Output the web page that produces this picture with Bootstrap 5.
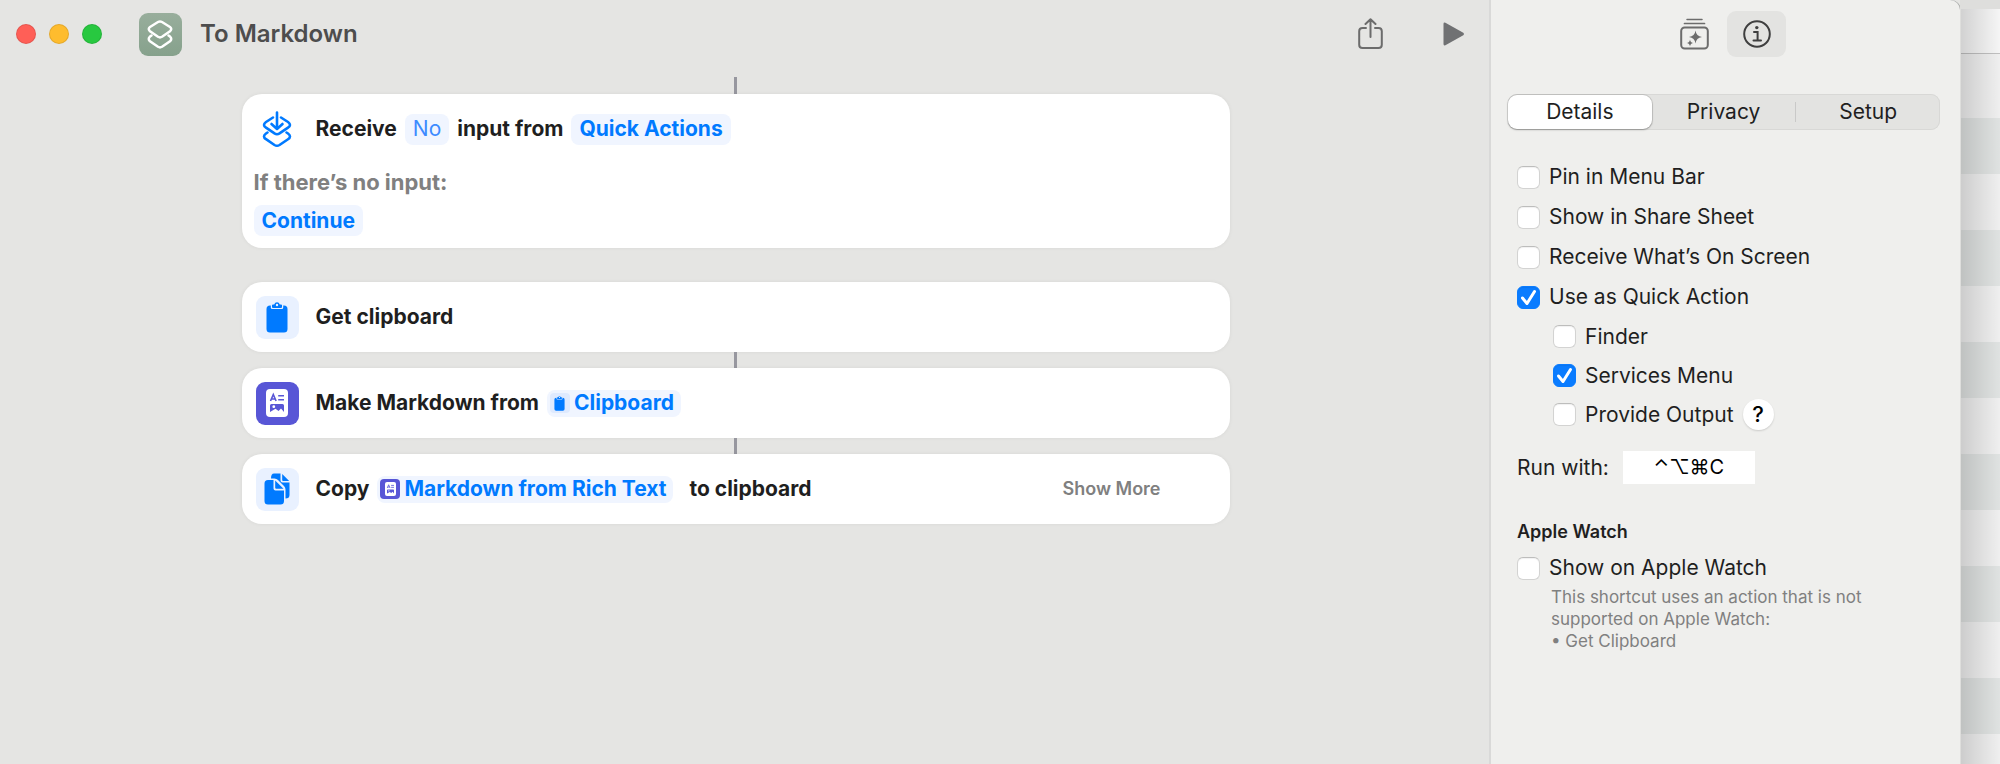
<!DOCTYPE html>
<html lang="en">
<head>
<meta charset="utf-8">
<meta name="viewport" content="width=device-width, initial-scale=1">
<title>To Markdown</title>
<link href="https://cdn.jsdelivr.net/npm/bootstrap@5.3.0/dist/css/bootstrap.min.css" rel="stylesheet">
<script src="https://cdn.jsdelivr.net/npm/bootstrap@5.3.0/dist/js/bootstrap.bundle.min.js"></script>
<style>
  body { font-family: Inter, "Liberation Sans", sans-serif; font-size: 21px; line-height: 30px; color: #1f1f1f; background: #e5e5e3; }
  svg { display: block; flex: none; }
  .editor { min-width: 0; }
  .titlebar { height: 68px; padding: 0 24px 0 16px; }
  .light { width: 20px; height: 20px; border-radius: 50%; border: 1px solid rgba(0,0,0,.1); padding: 0; }
  .light-close { background: #ff5f57; }
  .light-min { background: #febc2e; }
  .light-zoom { background: #28c840; }
  .lights { gap: 13px; margin-right: 37px; }
  .app-icon { width: 43px; height: 43px; border-radius: 9px; background: linear-gradient(#98ae9c, #86a18c); margin-right: 18px; }
  .doc-title { font-size: 24px; font-weight: 600; color: #4d4d4d; }
  .tool { border: 0; background: none; padding: 0; }
  .tools { gap: 60px; }

  .flow { padding: 9px 18px 40px 0; }
  .steps { width: 988px; max-width: 100%; }
  .step { background: #fff; border-radius: 20px; box-shadow: 0 0 4px rgba(0,0,0,.06); font-weight: 700; }
  .step-row { min-height: 70px; padding: 0 14px; }
  .step-icon { width: 43px; height: 43px; border-radius: 9px; background: #e9f1ff; margin-right: 17px; flex: none; }
  .step-icon-plain { background: none; }
  .step-icon-purple { background: #5856d6; }
  .link-line { width: 3px; height: 16px; background: #97979f; margin: 0 auto; }
  .link-first { height: 17px; }
  .link-gap { height: 34px; }
  .pill { border: 0; border-radius: 8px; background: #f0f5ff; color: #007aff; font-weight: 700; padding: 0 8px; height: 31px; line-height: 30px; }
  .pill-light { font-weight: 400; color: #3d8bff; }
  .pill-var { height: 27px; line-height: 26px; padding: 0 7px 0 3px; gap: 4px; }
  .mini { width: 20px; height: 20px; border-radius: 4px; background: #dfeafe; }
  .mini-purple { background: #5856d6; }
  .otherwise { padding: 3px 12px 12px; }
  .muted { font-size: 22px; color: #808080; }
  .show-more { border: 0; background: none; padding: 0; font-size: 18px; font-weight: 600; color: #808080; margin-right: 55px; }

  .inspector { flex: 0 0 471px; background: #efefed; border-left: 2px solid #d9d9d8; border-top-right-radius: 10px; box-shadow: 1px 0 0 #a9abaa; padding: 11px 20px 24px 17px; }
  .inspector-tools { padding-right: 154px; gap: 18px; height: 46px; }
  .info-on { width: 59px; height: 46px; border-radius: 9px; background: #e3e3e1; }
  .segments { margin-top: 37px; height: 36px; border-radius: 9px; background: #e3e3e1; box-shadow: inset 0 0 0 1px #d8d8d6; }
  .segment { flex: 1 1 0; border: 0; background: none; padding: 0; color: #1f1f1f; line-height: 34px; }
  .segment-on { background: #fff; border-radius: 9px; height: 34px; margin: 1px 0; box-shadow: 0 0 0 1px rgba(0,0,0,.1), 0 1px 2px rgba(0,0,0,.25); }
  .segment-sep { width: 1px; height: 20px; background: #c9c9c8; }
  .options { padding: 0 9px; margin-top: 27px; }
  .opt { height: 40px; gap: 9px; padding: 0; margin: 0; min-height: 0; }
  .opt .form-check-input { width: 23px; height: 23px; margin: 0; float: none; border: 1px solid #d3d3d2; border-top-color: #bdbdbc; border-radius: 6px; background-color: #fff; box-shadow: inset 0 1px 1px rgba(0,0,0,.06); flex: none; }
  .opt .form-check-input:checked { border-color: #0a7cff; background-color: #0a7cff; background-size: 23px 23px; background-position: center;
    background-image: url("data:image/svg+xml,%3csvg xmlns='http://www.w3.org/2000/svg' viewBox='0 0 23 23'%3e%3cpath fill='none' stroke='%23fff' stroke-width='3' stroke-linecap='round' stroke-linejoin='round' d='M5.5 12l4.5 5.5L17.500 5.500'/%3e%3c/svg%3e"); }
  .sub-options { padding-left: 36px; }
  .sub-options .opt { height: 39px; }
  .help { width: 31px; height: 31px; border: 0; border-radius: 50%; background: #fff; padding: 0; line-height: 31px; font-size: 22px; font-weight: 500; box-shadow: 0 1px 2px rgba(0,0,0,.15); }
  .run-with { margin-top: 17px; gap: 14px; }
  .hotkey { width: 132px; height: 33px; border: 0; border-radius: 0; background: #fff; padding: 0; color: #000; text-align: center; font: 20px/33px Inter, "DejaVu Sans", sans-serif; }
  .watch-title { font-size: 18px; line-height: 24px; font-weight: 600; margin: 36px 0 4px; }
  .watch-note { font-size: 17px; line-height: 22px; color: #808080; margin: -2px 0 0 34px; max-width: 340px; }

  .behind { flex: 0 0 40px; background: #dededc; padding: 9px 0 0 1px; }
  .behind-head { height: 45px; background: #fafafa; border-bottom: 1px solid #c4c4c4; }
  .behind-rows { background: linear-gradient(#f4f4f4 64px, transparent 64px), repeating-linear-gradient(#e4e7e6 0 56px, #f4f4f4 56px 112px) 0 64px; }
  .behind-inner { position: relative; }
  .behind-inner::after { content: ""; position: absolute; inset: 0; background: linear-gradient(90deg, rgba(0,0,0,.16), rgba(0,0,0,.02)); }
</style>
</head>
<body>
<!-- shared glyphs for the clipboard and rich text document icons -->
<svg width="0" height="0" class="position-absolute" aria-hidden="true">
  <symbol id="clip" viewBox="0 0 22 31">
    <path fill="#007aff" d="M4 3.500H4.800V5.500Q4.800 7 6.300 7H15.700Q17.200 7 17.200 5.500V3.500H18Q21.500 3.500 21.500 7V27Q21.500 30.500 18 30.500H4Q.5 30.500 .5 27V7Q.5 3.500 4 3.500Z"/>
    <path fill="#007aff" fill-rule="evenodd" d="M6 3.200Q6 2.500 7 2.500H8.200Q9 .3 11 .3T13.800 2.500H15Q16 2.500 16 3.200V5Q16 6 15 6H7Q6 6 6 5ZM11 1.800A1.200 1.200 0 1 0 11 4.200 1.200 1.200 0 1 0 11 1.800Z"/>
  </symbol>
  <symbol id="richdoc" viewBox="0 0 22 28">
    <rect width="22" height="28" rx="4" fill="#fff"/>
    <path d="M4.500 12L7.300 5.500 10.100 12M5.700 10H9M12.200 6.800H18M12.200 10.700H18" fill="none" stroke="#5856d6" stroke-width="1.600"/>
    <path fill="#5856d6" fill-rule="evenodd" d="M5.500 15H16.500Q18 15 18 16.500V23L15 19.500 12.500 22 9.500 19.800 4 23V16.500Q4 15 5.500 15ZM7.800 16.300A1.400 1.400 0 1 0 7.800 19.100 1.400 1.400 0 1 0 7.800 16.300Z"/>
  </symbol>
</svg>

<div class="d-flex min-vh-100">
  <main class="editor flex-grow-1">
    <header class="titlebar d-flex align-items-center">
      <div class="lights d-flex">
        <button class="light light-close" aria-label="Close"></button>
        <button class="light light-min" aria-label="Minimize"></button>
        <button class="light light-zoom" aria-label="Zoom"></button>
      </div>
      <div class="app-icon">
        <svg width="43" height="43" viewBox="0 0 43 43" fill="none" stroke="#fff" stroke-width="2.500" stroke-linejoin="round" stroke-linecap="round">
          <path d="M19 9Q21 7.800 23 9L31 14Q33.500 16 31 18.200L23 23.800Q21 25 19 23.800L11 18.200Q8.500 16 11 14Z"/>
          <path d="M12.500 22.500L11 23.600Q8.500 26 11 28.200L19 33.800Q21 35 23 33.800L31 28.200Q33.500 26 31 23.600L29.500 22.500"/>
        </svg>
      </div>
      <h1 class="doc-title m-0">To Markdown</h1>
      <div class="tools d-flex align-items-center ms-auto">
        <button class="tool" aria-label="Share">
          <svg width="25" height="32" viewBox="0 0 25 32" fill="none" stroke="#6c6c6c" stroke-width="2" stroke-linecap="round" stroke-linejoin="round"><path d="M8 10H4.500Q1.200 10 1.200 13.300V26.700Q1.200 30 4.500 30H20.500Q23.800 30 23.800 26.700V13.300Q23.800 10 20.500 10H17M12.500 19V1.500M7.500 6L12.500 1.200 17.500 6"/></svg>
        </button>
        <button class="tool" aria-label="Run">
          <svg width="22" height="24" viewBox="0 0 22 24"><path fill="#707173" d="M.5 2Q.5 0 2.400 .8L20.300 10.700Q22 12 20.300 13.300L2.400 23.200Q.5 24 .5 22Z"/></svg>
        </button>
      </div>
    </header>

    <div class="flow">
      <div class="steps mx-auto">
        <div class="link-line link-first"></div>
        <section class="step">
          <div class="step-row d-flex align-items-center">
            <div class="step-icon step-icon-plain">
              <svg width="43" height="43" viewBox="0 0 43 43" fill="none" stroke="#007aff" stroke-width="2.600" stroke-linejoin="round" stroke-linecap="round">
                <path d="M17 9.500L10 14Q6 17 10 19.600L18.500 25.400Q21 27 23.500 25.400L32 19.600Q36 17 32 14L25 9.500"/>
                <path d="M21 4.500V20.500M15.500 16L21 21 26.500 16"/>
                <path d="M11.500 24.500L10 25.500Q6 28.500 10 31.200L18.500 37Q21 38.500 23.500 37L32 31.200Q36 28.500 32 25.500L30.500 24.500"/>
              </svg>
            </div>
            <div class="d-flex align-items-center gap-2">
              <span>Receive</span>
              <button class="pill pill-light">No</button>
              <span>input from</span>
              <button class="pill">Quick Actions</button>
            </div>
          </div>
          <div class="otherwise">
            <div class="muted pb-2">If there’s no input:</div>
            <button class="pill d-block">Continue</button>
          </div>
        </section>
        <div class="link-gap"></div>
        <section class="step step-row d-flex align-items-center">
          <div class="step-icon d-flex align-items-center justify-content-center"><svg width="22" height="31"><use href="#clip"/></svg></div>
          <span>Get clipboard</span>
        </section>
        <div class="link-line"></div>
        <section class="step step-row d-flex align-items-center">
          <div class="step-icon step-icon-purple d-flex align-items-center justify-content-center"><svg width="22" height="28"><use href="#richdoc"/></svg></div>
          <div class="d-flex align-items-center gap-2">
            <span>Make Markdown from</span>
            <button class="pill pill-var d-flex align-items-center">
              <span class="mini d-flex align-items-center justify-content-center"><svg width="11" height="15"><use href="#clip"/></svg></span>Clipboard</button>
          </div>
        </section>
        <div class="link-line"></div>
        <section class="step step-row d-flex align-items-center">
          <div class="step-icon d-flex align-items-center justify-content-center">
            <svg width="27" height="32" viewBox="0 0 27 32" fill="#007aff">
              <path d="M10 .5H16.500V7.500Q16.500 9.500 18.500 9.500H25.500V22Q25.500 25.500 21.500 25.500V16.500Q21.500 14.500 20 13L14 7Q12.500 5.500 10.500 5.500H7Q7 .5 10 .5Z"/>
              <path d="M18.200 1L25.200 8H19.200Q18.200 8 18.200 7Z"/>
              <path d="M4 7H9.500V15.500Q9.500 17.500 11.500 17.500H20V28Q20 31.500 16.500 31.500H4Q.5 31.500 .5 28V10.500Q.5 7 4 7Z"/>
              <path d="M11.200 7.500L19.500 15.800H12.200Q11.200 15.800 11.200 14.800Z"/>
            </svg>
          </div>
          <div class="d-flex align-items-center gap-2">
            <span>Copy</span>
            <button class="pill pill-var d-flex align-items-center">
              <span class="mini mini-purple d-flex align-items-center justify-content-center"><svg width="11" height="14"><use href="#richdoc"/></svg></span>Markdown from Rich Text</button>
            <span class="ps-2">to clipboard</span>
          </div>
          <button class="show-more ms-auto">Show More</button>
        </section>
      </div>
    </div>
  </main>

  <aside class="inspector">
    <div class="inspector-tools d-flex align-items-center justify-content-end">
      <button class="tool" aria-label="Action library">
        <svg width="29" height="32" viewBox="0 0 29 32" fill="none" stroke="#6c6c6c" stroke-width="2" stroke-linecap="round">
          <path d="M7 1.500H22" stroke-width="1.500"/><path d="M4.500 5.500H24.500" stroke-width="1.700"/>
          <rect x="1.200" y="9.500" width="26.600" height="21" rx="3.500"/>
          <path fill="#6c6c6c" stroke="none" d="M15.500 12.500Q16.200 18.300 22 19 16.200 19.700 15.500 25.500 14.800 19.700 9 19 14.800 18.300 15.500 12.500ZM10 21.500Q10.400 24.600 13.500 25 10.400 25.400 10 28.500 9.600 25.400 6.500 25 9.600 24.600 10 21.500Z"/>
        </svg>
      </button>
      <button class="tool info-on d-flex align-items-center justify-content-center" aria-label="Shortcut details">
        <svg width="28" height="28" viewBox="0 0 28 28" fill="none" stroke="#3f3f3f" stroke-width="2"><circle cx="14" cy="14" r="12.800"/><circle cx="13.800" cy="7.600" r="1.700" fill="#3f3f3f" stroke="none"/><path d="M11 12H14.600V20.300M10.500 20.500H18" stroke-linecap="round"/></svg>
      </button>
    </div>

    <div class="segments d-flex align-items-center" role="tablist">
      <button class="segment segment-on" role="tab" aria-selected="true">Details</button>
      <button class="segment" role="tab" aria-selected="false">Privacy</button>
      <div class="segment-sep"></div>
      <button class="segment" role="tab" aria-selected="false">Setup</button>
    </div>

    <div class="options">
      <div>
        <div class="opt form-check d-flex align-items-center"><input class="form-check-input" type="checkbox" id="pin"><label for="pin">Pin in Menu Bar</label></div>
        <div class="opt form-check d-flex align-items-center"><input class="form-check-input" type="checkbox" id="share"><label for="share">Show in Share Sheet</label></div>
        <div class="opt form-check d-flex align-items-center"><input class="form-check-input" type="checkbox" id="screen"><label for="screen">Receive What’s On Screen</label></div>
        <div class="opt form-check d-flex align-items-center"><input class="form-check-input" type="checkbox" id="quick" checked><label for="quick">Use as Quick Action</label></div>
        <div class="sub-options">
          <div class="opt form-check d-flex align-items-center"><input class="form-check-input" type="checkbox" id="finder"><label for="finder">Finder</label></div>
          <div class="opt form-check d-flex align-items-center"><input class="form-check-input" type="checkbox" id="services" checked><label for="services">Services Menu</label></div>
          <div class="opt form-check d-flex align-items-center"><input class="form-check-input" type="checkbox" id="output"><label for="output">Provide Output</label><button class="help" aria-label="Help">?</button></div>
        </div>
      </div>
      <div class="run-with d-flex align-items-center">
        <label for="hotkey">Run with:</label>
        <input class="hotkey" id="hotkey" type="text" value="⌃⌥⌘C">
      </div>
      <h2 class="watch-title">Apple Watch</h2>
      <div class="opt form-check d-flex align-items-center"><input class="form-check-input" type="checkbox" id="watch"><label for="watch">Show on Apple Watch</label></div>
      <p class="watch-note">This shortcut uses an action that is not supported on Apple Watch:<br>• Get Clipboard</p>
    </div>
  </aside>

  <div class="behind d-flex flex-column">
    <div class="behind-inner flex-grow-1 d-flex flex-column">
      <div class="behind-head"></div>
      <div class="behind-rows flex-grow-1"></div>
    </div>
  </div>
</div>
</body>
</html>
